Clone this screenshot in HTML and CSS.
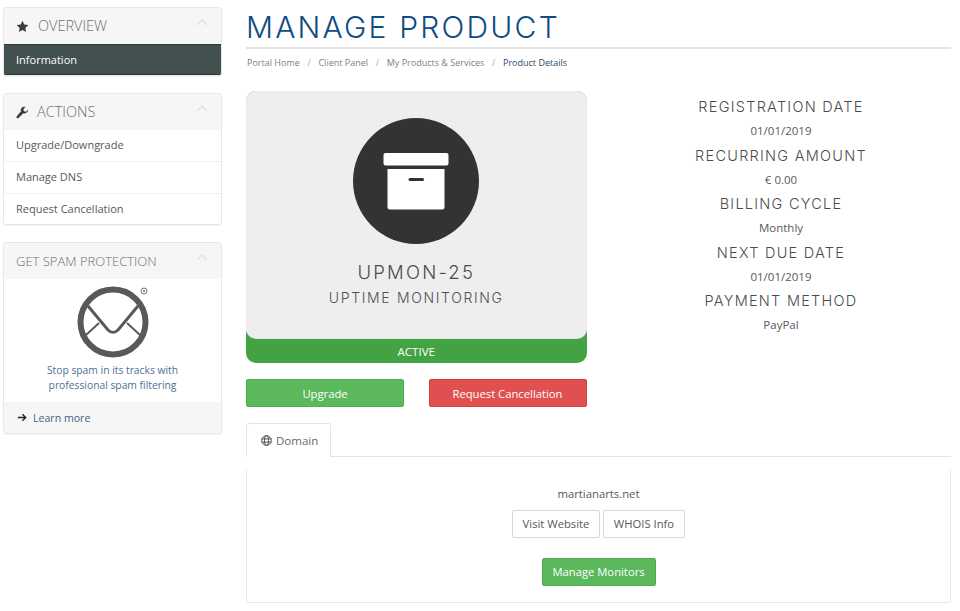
FILE: index.html
```html
<!DOCTYPE html>
<html lang="en">
<head>
<meta charset="utf-8">
<title>Manage Product</title>
<link rel="stylesheet" href="styles.css">
</head>
<body>
<div class="layout">
  <aside class="sidebar">
    <section class="panel">
      <header class="panel-head">
        <svg class="head-icon" viewBox="0 0 24 24"><path d="M12 1.500l3.200 7 7.600.9-5.600 5.200 1.500 7.500L12 18.400l-6.700 3.700 1.500-7.500L1.200 9.400l7.600-.9z"/></svg>
        <span>OVERVIEW</span>
        <svg class="chev" viewBox="0 0 12 7"><path d="M1 6l5-5 5 5"/></svg>
      </header>
      <a class="item active">Information</a>
    </section>
    <section class="panel">
      <header class="panel-head">
        <svg class="head-icon tight" viewBox="0 0 24 24"><path d="M22.500 6.500l-4 4-3.800-1-1-3.800 4-4c-2.800-.8-5.900-.1-7.500 1.900-1.500 1.800-1.800 4.100-1 6.200L1.500 18.900c-.9 1-.9 2.400 0 3.200.9.900 2.300.9 3.200 0l9-8.800c2.100.8 4.500.4 6.300-1.100 1.900-1.700 2.600-4.900 2.500-5.700z"/></svg>
        <span>ACTIONS</span>
        <svg class="chev" viewBox="0 0 12 7"><path d="M1 6l5-5 5 5"/></svg>
      </header>
      <a class="item">Upgrade/Downgrade</a>
      <a class="item">Manage DNS</a>
      <a class="item last">Request Cancellation</a>
    </section>
    <section class="panel">
      <header class="panel-head">
        <span class="promo-title">GET SPAM PROTECTION</span>
        <svg class="chev" viewBox="0 0 12 7"><path d="M1 6l5-5 5 5"/></svg>
      </header>
      <div class="promo">
        <svg class="spam-logo" viewBox="0 0 82 76">
          <circle cx="36" cy="38" r="32.500" class="ring"/>
          <path d="M11 22l20 24c3 3 7 3 10 0L61 22" class="flap"/>
          <path d="M9 51l13-12M63 51L50 39" class="fold"/>
          <circle cx="67" cy="7" r="3" class="reg"/>
          <circle cx="67" cy="7" r="1" class="reg-dot"/>
        </svg>
        <p>Stop spam in its tracks with<br>professional spam filtering</p>
      </div>
      <footer class="panel-foot">
        <svg class="arrow" viewBox="0 0 12 10"><path d="M1 5h9M6.500 1l4 4-4 4"/></svg>
        <a>Learn more</a>
      </footer>
    </section>
  </aside>
  <main class="main">
    <h1 class="title">MANAGE PRODUCT</h1>
    <nav class="crumbs">
      <a>Portal Home</a><i>/</i><a>Client Panel</a><i>/</i><a>My Products &amp; Services</a><i>/</i><b>Product Details</b>
    </nav>
    <div class="overview">
      <div class="left">
        <div class="product-card">
          <div class="product-body">
            <div class="circle">
              <svg viewBox="0 0 66 60" class="box-icon">
                <rect x=".5" y="0" width="65" height="12.500" rx="2"/>
                <path d="M4.500 16h57v38a2.500 2.500 0 0 1-2.500 2.500h-52A2.500 2.500 0 0 1 4.500 54z"/>
                <rect x="25.500" y="25" width="15.500" height="3" rx="1.500" class="slot"/>
              </svg>
            </div>
            <h2>UPMON-25</h2>
            <h3>UPTIME MONITORING</h3>
          </div>
          <div class="status">ACTIVE</div>
        </div>
        <div class="actions">
          <a class="btn green">Upgrade</a>
          <a class="btn red">Request Cancellation</a>
        </div>
      </div>
      <div class="details">
        <h4>REGISTRATION DATE</h4><p>01/01/2019</p>
        <h4>RECURRING AMOUNT</h4><p>€ 0.00</p>
        <h4>BILLING CYCLE</h4><p>Monthly</p>
        <h4>NEXT DUE DATE</h4><p>01/01/2019</p>
        <h4>PAYMENT METHOD</h4><p>PayPal</p>
      </div>
    </div>
    <div class="tabs">
      <a class="tab">
        <svg viewBox="0 0 24 24" class="globe"><circle cx="12" cy="12" r="10.500"/><ellipse cx="12" cy="12" rx="4.500" ry="10.500"/><path d="M1.500 8.500h21M1.500 15.500h21"/></svg>
        Domain
      </a>
    </div>
    <div class="tab-pane">
      <div class="domain">martianarts.net</div>
      <div class="btn-row">
        <a class="btn plain">Visit Website</a>
        <a class="btn plain">WHOIS Info</a>
      </div>
      <a class="btn green small">Manage Monitors</a>
    </div>
  </main>
</div>
</body>
</html>
```
FILE: styles.css
```css
* { box-sizing: border-box; }
html, body { margin: 0; padding: 0; background: #fff; }
body { font-family: "Open Sans", sans-serif; font-size: 11.25px; color: #58595b; height: 611px; overflow: hidden; }
.layout { display: flex; gap: 24px; padding: 7px 9px 0 3px; align-items: flex-start; }

.sidebar { width: 219px; flex: none; display: flex; flex-direction: column; gap: 17px; }
.panel { background: #fff; border: 1px solid #e8e8e8; border-radius: 3px; box-shadow: 0 1px 1px rgba(0,0,0,.05); overflow: hidden; }
.panel-head { height: 36px; background: #f6f6f6; display: flex; align-items: center; padding: 0 12px 2px; color: #6f6f6f; font-size: 14.500px; font-weight: 300; }
.promo-title { font-size: 13px; margin-top: 2px; }
.head-icon { width: 13px; height: 13px; fill: #3d3d3d; margin-top: 2px; margin-right: 9px; flex: none; }
.head-icon.tight { margin-right: 8px; }
.chev { width: 12px; height: 7px; margin-left: auto; margin-right: 1px; margin-top: -5px; fill: none; stroke: #e4e4e4; stroke-width: 1.600; flex: none; }
.item { display: block; height: 32px; line-height: 30px; padding: 0 12px; color: #58595b; font-size: 11px; border-top: 1px solid #f0f0f0; }
.item.last { height: 31px; }
.panel-head + .item { height: 31px; border-top: 0; }
.item.active { height: 31px; background: #435050; color: #fff; font-weight: 500; border-top: 1px solid #333; border-bottom: 1px solid #333; line-height: 30px; }
.promo { text-align: center; padding: 5px 0 0; height: 123px; }
.spam-logo { display: block; width: 82px; height: 76px; margin: 0 0 0 73px; }
.ring { fill: #fff; stroke: #595959; stroke-width: 6; }
.flap { fill: none; stroke: #595959; stroke-width: 3; }
.fold { fill: none; stroke: #595959; stroke-width: 2; }
.reg { fill: none; stroke: #777; stroke-width: 1; }
.reg-dot { fill: #777; }
.promo p { margin: 2.500px 0 0; font-size: 10.300px; line-height: 15.500px; color: #4e6f96; }
.panel-foot { height: 31px; background: #f6f6f6; display: flex; align-items: center; padding: 0 13px; gap: 6px; font-size: 10.600px; color: #3f6287; }
.arrow { width: 10px; height: 9px; fill: none; stroke: #222; stroke-width: 1.600; flex: none; }

.main { width: 705px; flex: none; }
.title { margin: 0; height: 42px; padding-top: 1px; border-bottom: 2px solid #e4e4e4; color: #0f4c81; font-family: "Inter", sans-serif; font-weight: 300; font-size: 30px; line-height: 38px; letter-spacing: 2.200px; }
.crumbs { display: flex; align-items: center; height: 14px; margin-top: 6px; padding-left: 1px; font-size: 9px; color: #808080; }
.crumbs i { font-style: normal; margin: 0 7.700px; color: #aaa; }
.crumbs b { font-weight: 400; color: #2b4a6b; }

.overview { display: flex; margin-top: 22px; }
.left { width: 340.500px; flex: none; }
.product-card { height: 272px; background: #43a343; border-radius: 10px; overflow: hidden; }
.product-body { height: 247px; background: #eeeeee; border-radius: 0 0 10px 10px; text-align: center; padding-top: 27px; box-shadow: 0 1px 0 #e5e5e5; }
.circle { width: 126px; height: 126px; border-radius: 50%; background: #333; margin: 0 auto; display: flex; align-items: center; justify-content: center; }
.box-icon { width: 66px; height: 60px; fill: #fff; margin-top: 3px; }
.box-icon .slot { fill: #333; }
.product-body h2 { margin: 16px 0 0; font-family: "Inter", sans-serif; font-weight: 300; font-size: 18.500px; line-height: 25px; letter-spacing: 2.200px; color: #4b4b4b; }
.product-body h3 { margin: 2px 0 0; font-family: "Inter", sans-serif; font-weight: 300; font-size: 14px; line-height: 22px; letter-spacing: 1.650px; color: #4f4f51; }
.status { height: 25px; line-height: 27px; text-align: center; color: #fff; font-size: 11.500px; }
.actions { display: flex; justify-content: space-between; margin-top: 16px; }
.btn { display: block; text-align: center; font-size: 11.250px; border-radius: 2px; }
.green { background: #5cb85c; border: 1px solid #4cae4c; color: #fff; }
.red { background: #e05050; border: 1px solid #d43f3a; color: #fff; }
.actions .btn { width: 158px; height: 28px; line-height: 27px; }

.details { flex: 1; text-align: center; margin-left: 24.500px; padding-top: 4px; }
.details h4 { margin: 0; font-family: "Inter", sans-serif; font-weight: 300; font-size: 14.500px; line-height: 24px; letter-spacing: 1.250px; color: #4b4b4b; }
.details p { margin: 0; font-size: 11.500px; line-height: 24.500px; color: #58595b; }

.tabs { display: flex; height: 34px; margin-top: 16px; border-bottom: 1px solid #e4e4e4; }
.tab { display: flex; align-items: center; gap: 4px; width: 85px; height: 34px; padding-left: 14px; background: #fff; border: 1px solid #e4e4e4; border-bottom: 0; border-radius: 3px 3px 0 0; color: #68696b; font-size: 11.500px; }
.globe { width: 11px; height: 11px; fill: none; stroke: #444; stroke-width: 2; flex: none; }
.tab-pane { margin-top: 13px; height: 133px; border: 1px solid #e8e8e8; border-top: 0; text-align: center; padding-top: 17px; }
.domain { font-size: 11.300px; line-height: 14px; color: #58595b; }
.btn-row { display: flex; justify-content: center; gap: 3px; margin-top: 9px; }
.plain { width: 88px; height: 28px; line-height: 26px; background: #fff; border: 1px solid #d9d9d9; color: #58595b; }
.plain + .plain { width: 82px; }
.small { width: 114px; height: 28px; line-height: 26px; margin: 20px auto 0; }
```
